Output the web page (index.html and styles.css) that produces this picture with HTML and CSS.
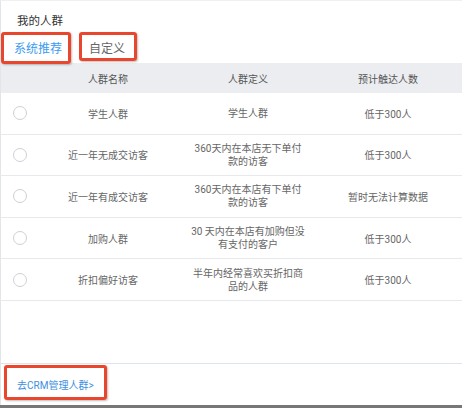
FILE: index.html
```html
<!DOCTYPE html>
<html lang="zh">
<head>
<meta charset="utf-8">
<link rel="stylesheet" href="styles.css">
</head>
<body>
<div class="panel">
  <div class="title">我的人群</div>
  <div class="tabs">
    <span class="tab active">系统推荐</span>
    <span class="tab">自定义</span>
  </div>
  <div class="table">
    <div class="row head">
      <div class="cell"></div>
      <div class="cell">人群名称</div>
      <div class="cell">人群定义</div>
      <div class="cell">预计触达人数</div>
    </div>
    <div class="row">
      <div class="cell"><span class="radio"></span></div>
      <div class="cell">学生人群</div>
      <div class="cell"><span class="def">学生人群</span></div>
      <div class="cell">低于300人</div>
    </div>
    <div class="row">
      <div class="cell"><span class="radio"></span></div>
      <div class="cell">近一年无成交访客</div>
      <div class="cell"><span class="def">360天内在本店无下单付款的访客</span></div>
      <div class="cell">低于300人</div>
    </div>
    <div class="row">
      <div class="cell"><span class="radio"></span></div>
      <div class="cell">近一年有成交访客</div>
      <div class="cell"><span class="def">360天内在本店有下单付款的访客</span></div>
      <div class="cell">暂时无法计算数据</div>
    </div>
    <div class="row">
      <div class="cell"><span class="radio"></span></div>
      <div class="cell">加购人群</div>
      <div class="cell"><span class="def">30 天内在本店有加购但没有支付的客户</span></div>
      <div class="cell">低于300人</div>
    </div>
    <div class="row">
      <div class="cell"><span class="radio"></span></div>
      <div class="cell">折扣偏好访客</div>
      <div class="cell"><span class="def">半年内经常喜欢买折扣商品的人群</span></div>
      <div class="cell">低于300人</div>
    </div>
  </div>
  <div class="spacer"></div>
  <div class="footer">
    <a class="link">去CRM管理人群&gt;</a>
  </div>
</div>
<div class="bar"></div>
<div class="mark mark-1"></div>
<div class="mark mark-2"></div>
<div class="mark mark-3"></div>
</body>
</html>
```

FILE: styles.css
```css
html, body {
  margin: 0;
  padding: 0;
  background: #ffffff;
}
body {
  width: 462px;
  height: 408px;
  overflow: hidden;
  position: relative;
  font-family: Roboto, "Noto Sans CJK SC", sans-serif;
}
.panel {
  box-sizing: border-box;
  height: 405px;
  border-left: 1px solid #e3e5e8;
  border-top: 1px solid #f0f0f0;
  display: flex;
  flex-direction: column;
}
.title {
  font-size: 11.5px;
  line-height: 14px;
  color: #333;
  padding: 13px 0 0 16px;
}
.tabs {
  display: flex;
  align-items: center;
  gap: 27px;
  height: 35px;
  padding: 3px 0 0 13px;
  box-sizing: border-box;
  font-size: 12px;
}
.tab {
  color: #666;
}
.tab.active {
  color: #3d9bf0;
}
.row {
  display: grid;
  grid-template-columns: 37px 140px 140px 140px;
  box-sizing: border-box;
  height: 41.6px;
  border-bottom: 1px solid #e7e9ec;
  font-size: 10px;
  color: #666;
}
.row.head {
  height: 30px;
  background: #ebedf0;
  border-bottom: none;
  color: #555;
}
.cell {
  display: flex;
  align-items: center;
  justify-content: center;
  text-align: center;
}
.def {
  display: block;
  max-width: 115.5px;
  line-height: 13px;
}
.radio {
  width: 14px;
  height: 14px;
  box-sizing: border-box;
  border: 1px solid #cdd1d6;
  border-radius: 50%;
  background: #fff;
}
.spacer {
  flex: 1;
}
.footer {
  height: 41px;
  border-top: 1px solid #dde4ec;
  display: flex;
  align-items: center;
  padding-left: 16px;
}
.link {
  font-size: 10px;
  color: #3d8fe0;
}
.bar {
  height: 3px;
  background: #777;
}
.mark {
  position: absolute;
  box-sizing: border-box;
  border: 3px solid #e8462d;
  border-radius: 3px;
  box-shadow: 1px 1px 2px rgba(0,0,0,0.25);
}
.mark-1 {
  left: 1px;
  top: 32px;
  width: 70px;
  height: 32px;
}
.mark-2 {
  left: 79px;
  top: 32px;
  width: 58px;
  height: 29px;
}
.mark-3 {
  left: 4px;
  top: 365px;
  width: 103px;
  height: 35px;
}
```
